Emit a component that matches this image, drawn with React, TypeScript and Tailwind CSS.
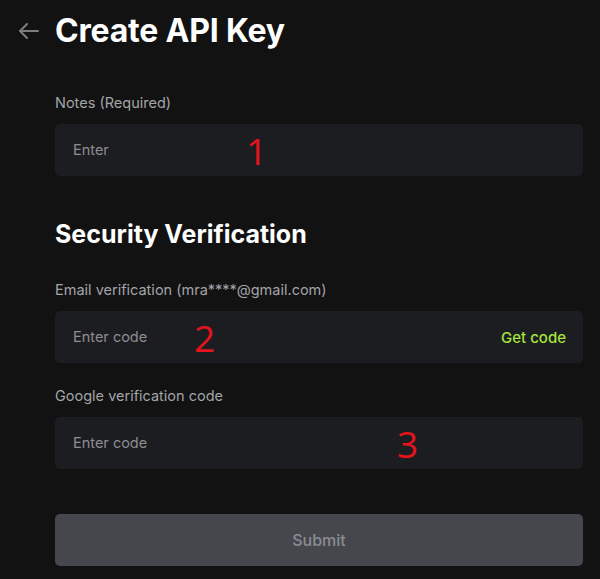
import React from "react";

const font = { fontFamily: '"Inter", "Noto Sans", sans-serif' };

function Field({ label, placeholder, num, numLeft, right }: { label: string; placeholder: string; num: string; numLeft: string; right?: React.ReactNode }) {
  return (
    <div className="flex flex-col">
      <div className="text-[14.5px] leading-[20px] text-[#a3a4a8]">{label}</div>
      <div className="relative mt-[11px] h-[52px] rounded-[5px] bg-[#1c1d20] flex items-center pl-[18px] pr-[17px]">
        <span className="text-[14.5px] text-[#8d8e92]">{placeholder}</span>
        <span
          className={`absolute top-1/2 -translate-y-1/2 text-[37px] leading-none text-[#e5131b] ${numLeft}`}
          style={{ fontFamily: '"Open Sans", sans-serif', fontWeight: 400 }}
        >
          {num}
        </span>
        {right && <div className="ml-auto">{right}</div>}
      </div>
    </div>
  );
}

export default function App() {
  return (
    <div className="min-h-screen w-[600px] h-[579px] bg-[#121212] overflow-hidden" style={font}>
      <div className="flex items-center pl-[17px] pt-[12px] h-[38px] box-content">
        <svg width="24" height="24" viewBox="0 0 24 24" fill="none" stroke="#7c7d80" strokeWidth="2" strokeLinecap="round" strokeLinejoin="round">
          <path d="M21 12H3" />
          <path d="M10 5l-7 7 7 7" />
        </svg>
        <h1 className="ml-[14px] text-[32px] leading-[38px] font-bold text-white tracking-[-0.2px]">Create API Key</h1>
      </div>
      <div className="pl-[55px] pr-[17px] pt-[43px] flex flex-col">
        <Field label="Notes (Required)" placeholder="Enter" num="1" numLeft="left-[191px]" />
        <h2 className="mt-[43px] text-[25px] leading-[30px] font-bold text-white">Security Verification</h2>
        <div className="mt-[31px]">
          <Field
            label="Email verification (mra****@gmail.com)"
            placeholder="Enter code"
            num="2"
            numLeft="left-[139px]"
            right={<span className="text-[15px] font-medium text-[#a6e23d]">Get code</span>}
          />
        </div>
        <div className="mt-[23px]">
          <Field label="Google verification code" placeholder="Enter code" num="3" numLeft="left-[342px]" />
        </div>
        <button className="mt-[45px] h-[52px] rounded-[5px] bg-[#45474d] text-[16px] font-medium text-[#8b8c91]">Submit</button>
      </div>
    </div>
  );
}
